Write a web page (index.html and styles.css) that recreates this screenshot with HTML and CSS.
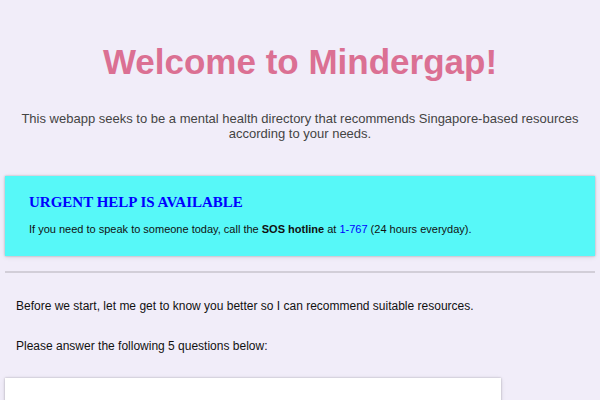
FILE: index.html
```html
<!DOCTYPE html>
<html lang="en">
<head>
<meta charset="utf-8">
<meta name="viewport" content="width=device-width, initial-scale=1">
<title>Mindergap</title>
<link rel="stylesheet" href="styles.css">
</head>
<body>
<header class="intro">
<h1>Welcome to Mindergap!</h1>
<p>This webapp seeks to be a mental health directory that recommends Singapore-based resources according to your needs.</p>
</header>
<section class="urgent">
<h2>URGENT HELP IS AVAILABLE</h2>
<p>If you need to speak to someone today, call the <strong>SOS hotline</strong> at <a href="tel:1767">1-767</a> (24 hours everyday).</p>
</section>
<hr class="divider">
<main>
<div class="lead">
<p>Before we start, let me get to know you better so I can recommend suitable resources.</p>
<p>Please answer the following 5 questions below:</p>
</div>
<form class="quiz"></form>
</main>
</body>
</html>
```
FILE: styles.css
```css
body {
  margin: 0;
  padding: 0 5px;
  background: #f1edf9;
  color: #111;
  font-family: "Liberation Sans", Arial, sans-serif;
}

.intro {
  padding: 41px 12px 35px;
  text-align: center;
}

.intro h1 {
  margin: 0;
  color: #db7093;
  font-size: 35px;
  line-height: 42px;
}

.intro p {
  margin: 28px 0 0;
  color: #444;
  font-size: 13px;
  line-height: 15px;
}

.urgent {
  padding: 18px 24px 20px;
  background: #57f8f8;
  box-shadow: 0 0 2px rgba(0, 0, 0, 0.25), 0 1px 5px rgba(0, 0, 0, 0.1);
}

.urgent h2 {
  margin: 0;
  color: #00f;
  font-family: "Liberation Serif", "Times New Roman", serif;
  font-size: 15px;
  line-height: 17px;
}

.urgent p {
  margin: 11px 0 0;
  font-size: 11px;
  line-height: 14px;
}

.urgent a {
  color: #00f;
  text-decoration: none;
}

.divider {
  height: 2px;
  margin: 15px 0 26px;
  border: 0;
  background: #d2ced8;
}

.lead {
  padding: 0 11px;
  font-size: 12px;
  line-height: 14px;
}

.lead p {
  margin: 0 0 26px;
}

.lead p:last-child {
  margin-bottom: 25px;
}

.quiz {
  width: 84%;
  min-height: 200px;
  background: #fff;
  box-shadow: 0 0 2px rgba(0, 0, 0, 0.25), 0 1px 5px rgba(0, 0, 0, 0.1);
}
```
